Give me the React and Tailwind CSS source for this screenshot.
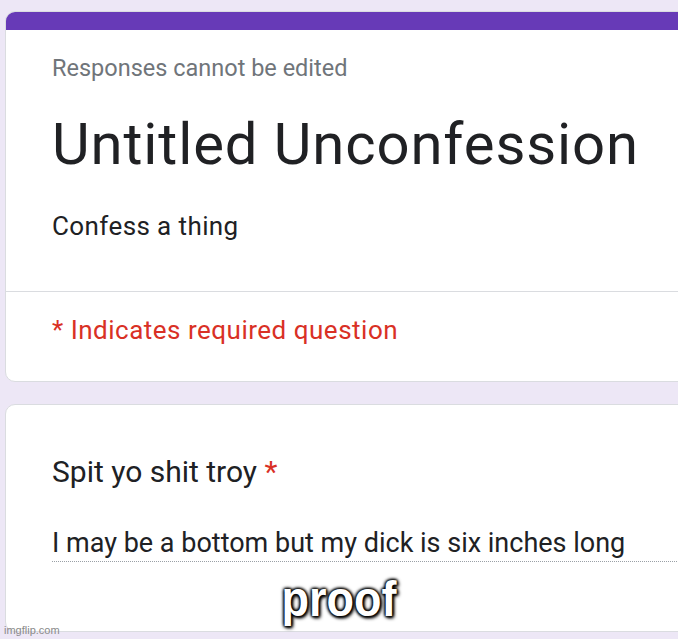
export default function App() {
  const roboto = { fontFamily: 'Roboto, "Liberation Sans", sans-serif' };
  return (
    <div className="relative w-[678px] h-[639px] overflow-hidden bg-[#ede7f6]" style={roboto}>
      <div className="pl-[5px] pt-[11px] w-[720px] flex flex-col gap-[22px]">
        {/* Card 1 */}
        <div className="bg-white rounded-[10px] border border-[#dadce0] overflow-hidden">
          <div className="h-[18px] bg-[#673ab7]" />
          <div className="pl-[46px] pt-[24px]">
            <div className="text-[23.5px] leading-[28px] text-[#70757a]">Responses cannot be edited</div>
            <div className="mt-[26px] text-[58px] leading-[72px] tracking-[0.9px] text-[#202124]">Untitled Unconfession</div>
            <div className="mt-[30px] text-[26px] leading-[32px] tracking-[0.4px] text-[#202124]">Confess a thing</div>
          </div>
          <div className="mt-[49px] border-t border-[#dadce0]" />
          <div className="pl-[46px] pt-[22px] pb-[35px]">
            <div className="text-[26px] leading-[32px] tracking-[0.5px] text-[#d93025]">* Indicates required question</div>
          </div>
        </div>
        {/* Card 2 */}
        <div className="bg-white rounded-[10px] border border-[#dadce0] h-[228px]">
          <div className="pl-[46px] pt-[50px]">
            <div className="text-[30px] leading-[34px] text-[#202124]">
              Spit yo shit troy <span className="text-[#d93025]">*</span>
            </div>
            <div className="mt-[38px] text-[27px] leading-[32px] text-[#202124] pb-[2px] border-b border-dotted border-[#9aa0a6]">
              I may be a bottom but my dick is six inches long
            </div>
          </div>
        </div>
      </div>
      <div
        className="absolute left-0 w-[678px] top-[569px] text-center text-white font-bold text-[50px] leading-[60px] scale-x-90 [text-shadow:0_0_3px_#000,0_0_3px_#000,0_0_4px_#000,0_0_5px_#000,2px_2px_4px_#000]"
        style={{ fontFamily: '"Liberation Sans", Arial, sans-serif' }}
      >
        proof
      </div>
      <div
        className="absolute left-[4px] top-[623px] text-[11px] leading-[14px] text-[#8a8a8a]"
        style={{ fontFamily: '"Liberation Sans", Arial, sans-serif' }}
      >
        imgflip.com
      </div>
    </div>
  );
}
